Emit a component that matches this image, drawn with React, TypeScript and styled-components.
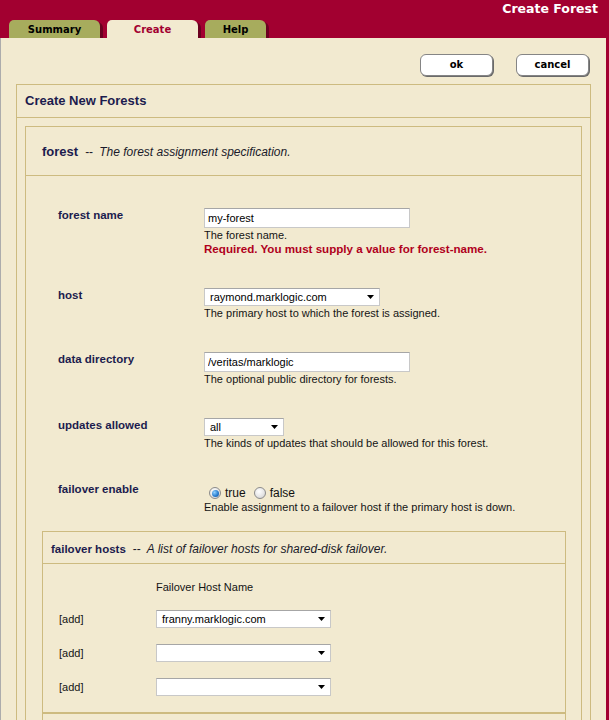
import React from "react";
import styled, { createGlobalStyle } from "styled-components";

const RED = "#a20030";
const CREAM = "#f2ead0";
const TAN = "#cdbb80";
const NAVY = "#1c1c4e";
const OLIVE = "#a7ac5d";

const GlobalStyle = createGlobalStyle`
  html, body {
    margin: 0;
    padding: 0;
    overflow: hidden;
    background: ${CREAM};
  }
  body {
    font-family: "Liberation Sans", Arial, sans-serif;
  }
  * { box-sizing: border-box; }
`;

const Page = styled.div`
  display: flex;
  flex-direction: column;
  width: 609px;
  height: 720px;
  overflow: hidden;
`;

const Header = styled.header`
  background: ${RED};
  height: 38px;
  display: flex;
  flex-direction: column;
  overflow: hidden;
  flex-shrink: 0;
`;

const TitleRow = styled.div`
  height: 20px;
  display: flex;
  justify-content: flex-end;
  align-items: center;
  padding-right: 11px;
  padding-bottom: 2px;
`;

const Title = styled.h1`
  margin: 0;
  font: bold 12.5px/18px "DejaVu Sans", Verdana, sans-serif;
  color: #ffffff;
`;

const Tabs = styled.nav`
  display: flex;
  gap: 7px;
  padding-left: 9px;
  height: 18px;
`;

const Tab = styled.div<{ $active?: boolean; $w: number }>`
  width: ${(p) => p.$w}px;
  height: 18px;
  border-radius: 5px 6px 0 0;
  background: ${(p) => (p.$active ? CREAM : OLIVE)};
  color: ${(p) => (p.$active ? RED : "#000")};
  box-shadow: 3px 2px 0 #6b0020;
  text-align: center;
  font: bold 10px/19px "DejaVu Sans", Verdana, sans-serif;
`;

const Body = styled.main`
  flex: 1;
  border-left: 1px solid #acacac;
  border-right: 3px solid ${RED};
  padding: 16px 15px 0;
`;

const ButtonBar = styled.div`
  display: flex;
  justify-content: flex-end;
  gap: 23px;
  padding-right: 2px;
  margin-bottom: 8px;
`;

const Button = styled.button`
  width: 73px;
  height: 22px;
  padding: 0;
  border: 1px solid #858585;
  border-radius: 6px;
  background: #ffffff;
  box-shadow: 1px 1px 0 #6a6a6a;
  font: bold 10px/18px "DejaVu Sans", Verdana, sans-serif;
  color: #000;
`;

const Panel = styled.section`
  border: 1px solid ${TAN};
`;

const PanelHeader = styled.h2`
  margin: 0;
  height: 33px;
  line-height: 32px;
  padding-left: 8px;
  border-bottom: 1px solid ${TAN};
  font-size: 13px;
  font-weight: bold;
  color: ${NAVY};
`;

const PanelBody = styled.div`
  padding: 8px;
`;

const Section = styled.div`
  border: 1px solid ${TAN};
`;

const SectionHeader = styled.div<{ $h: number; $pad: number }>`
  height: ${(p) => p.$h}px;
  display: flex;
  align-items: center;
  padding-left: ${(p) => p.$pad}px;
  border-bottom: 1px solid ${TAN};
`;

const HeaderText = styled.p`
  margin: 0;
  color: ${NAVY};
`;

const SectionName = styled.strong<{ $size: number }>`
  font-size: ${(p) => p.$size}px;
  font-weight: bold;
`;

const Dash = styled.span`
  font-size: 12px;
  margin: 0 6px 0 7px;
  color: #1a1a2a;
`;

const SectionDesc = styled.em`
  font-size: 12px;
  font-style: italic;
  color: #1a1a2a;
`;

const Fields = styled.div`
  display: flex;
  flex-direction: column;
  gap: 32px;
  padding: 32px 0 0 32px;
`;

const Field = styled.div`
  display: grid;
  grid-template-columns: 146px 1fr;
`;

const Label = styled.div`
  font: bold 11.5px/14px "Liberation Sans", Arial, sans-serif;
  color: ${NAVY};
`;

const Control = styled.div`
  display: flex;
  flex-direction: column;
  align-items: flex-start;
`;

const TextInput = styled.input`
  width: 206px;
  height: 20px;
  margin: 0;
  padding: 0 3px;
  border: 1px solid #c8c8c8;
  border-top-color: #a6a6a6;
  background: #ffffff;
  font: 11px "Liberation Sans", Arial, sans-serif;
  color: #000;
`;

const SelectBox = styled.div<{ $w: number }>`
  width: ${(p) => p.$w}px;
  height: 18px;
  display: flex;
  align-items: center;
  justify-content: space-between;
  padding: 0 5px 0 5px;
  border: 1px solid #c8c8c8;
  border-top-color: #a6a6a6;
  background: #ffffff;
  font: 11px/16px "Liberation Sans", Arial, sans-serif;
  color: #000;
`;

const Help = styled.p`
  margin: 0;
  font: 11px/14px "Liberation Sans", Arial, sans-serif;
  color: #141414;
`;

const ErrorText = styled.p`
  margin: 0;
  font: bold 11.6px/14px "Liberation Sans", Arial, sans-serif;
  color: #b0001c;
`;

const RadioLine = styled.div`
  height: 18px;
  padding-top: 4px;
  display: flex;
  align-items: center;
`;

const RadioOption = styled.label<{ $first?: boolean }>`
  display: flex;
  align-items: center;
  gap: 4px;
  margin-left: ${(p) => (p.$first ? 5 : 8)}px;
  font: 12px/14px "Liberation Sans", Arial, sans-serif;
  color: #111;
`;

const RadioCircle = styled.span`
  width: 12px;
  height: 12px;
  border-radius: 50%;
  border: 1px solid #8b8b8b;
  background: radial-gradient(circle at 40% 35%, #ffffff 0%, #e6e6e6 55%, #c9c9c9 100%);
  display: flex;
  align-items: center;
  justify-content: center;
`;

const RadioDot = styled.span`
  width: 7px;
  height: 7px;
  border-radius: 50%;
  background: radial-gradient(circle at 35% 35%, #8fd0ff 0%, #2b7fd0 55%, #0f4f98 100%);
`;

const SubSection = styled.div`
  margin: 17px 15px 0 16px;
  border: 1px solid ${TAN};
`;

const SubTable = styled.div`
  display: grid;
  grid-template-columns: 97px 175px;
  row-gap: 16px;
  align-items: center;
  padding: 16px 0 16px 16px;
`;

const ColumnHeading = styled.div`
  grid-column: 2;
  font: 11px/14px "Liberation Sans", Arial, sans-serif;
  color: #141414;
`;

const AddLink = styled.span`
  font: 11px/14px "Liberation Sans", Arial, sans-serif;
  color: #141414;
`;

const SubFooter = styled.div`
  height: 40px;
  border-top: 2px solid ${TAN};
`;

const Arrow = () => (
  <svg width="7" height="4" viewBox="0 0 7 4" aria-hidden="true">
    <polygon points="0,0 7,0 3.5,4" fill="#000" />
  </svg>
);

const Select = ({ w, value }: { w: number; value: string }) => (
  <SelectBox $w={w}>
    <span>{value}</span>
    <Arrow />
  </SelectBox>
);

const Radio = ({ checked, label, first }: { checked?: boolean; label: string; first?: boolean }) => (
  <RadioOption $first={first}>
    <RadioCircle>{checked && <RadioDot />}</RadioCircle>
    {label}
  </RadioOption>
);

export default function App() {
  const failoverRows = ["franny.marklogic.com", "", ""];
  return (
    <Page>
      <GlobalStyle />
      <Header>
        <TitleRow>
          <Title>Create Forest</Title>
        </TitleRow>
        <Tabs>
          <Tab $w={91}>Summary</Tab>
          <Tab $w={91} $active>
            Create
          </Tab>
          <Tab $w={61}>Help</Tab>
        </Tabs>
      </Header>
      <Body>
        <ButtonBar>
          <Button>ok</Button>
          <Button>cancel</Button>
        </ButtonBar>
        <Panel>
          <PanelHeader>Create New Forests</PanelHeader>
          <PanelBody>
            <Section>
              <SectionHeader $h={49} $pad={16}>
                <HeaderText>
                  <SectionName $size={13}>forest</SectionName>
                  <Dash>--</Dash>
                  <SectionDesc>The forest assignment specification.</SectionDesc>
                </HeaderText>
              </SectionHeader>
              <Fields>
                <Field>
                  <Label>forest name</Label>
                  <Control>
                    <TextInput defaultValue="my-forest" />
                    <Help>The forest name.</Help>
                    <ErrorText>Required. You must supply a value for forest-name.</ErrorText>
                  </Control>
                </Field>
                <Field>
                  <Label>host</Label>
                  <Control>
                    <Select w={176} value="raymond.marklogic.com" />
                    <Help>The primary host to which the forest is assigned.</Help>
                  </Control>
                </Field>
                <Field>
                  <Label>data directory</Label>
                  <Control>
                    <TextInput defaultValue="/veritas/marklogic" />
                    <Help>The optional public directory for forests.</Help>
                  </Control>
                </Field>
                <Field>
                  <Label>updates allowed</Label>
                  <Control>
                    <Select w={80} value="all" />
                    <Help>The kinds of updates that should be allowed for this forest.</Help>
                  </Control>
                </Field>
                <Field>
                  <Label>failover enable</Label>
                  <Control>
                    <RadioLine>
                      <Radio checked first label="true" />
                      <Radio label="false" />
                    </RadioLine>
                    <Help>Enable assignment to a failover host if the primary host is down.</Help>
                  </Control>
                </Field>
              </Fields>
              <SubSection>
                <SectionHeader $h={32} $pad={8}>
                  <HeaderText>
                    <SectionName $size={11.5}>failover hosts</SectionName>
                    <Dash>--</Dash>
                    <SectionDesc>A list of failover hosts for shared-disk failover.</SectionDesc>
                  </HeaderText>
                </SectionHeader>
                <SubTable>
                  <ColumnHeading>Failover Host Name</ColumnHeading>
                  {failoverRows.map((v, i) => (
                    <React.Fragment key={i}>
                      <AddLink>[add]</AddLink>
                      <Select w={175} value={v} />
                    </React.Fragment>
                  ))}
                </SubTable>
                <SubFooter />
              </SubSection>
            </Section>
          </PanelBody>
        </Panel>
      </Body>
    </Page>
  );
}
